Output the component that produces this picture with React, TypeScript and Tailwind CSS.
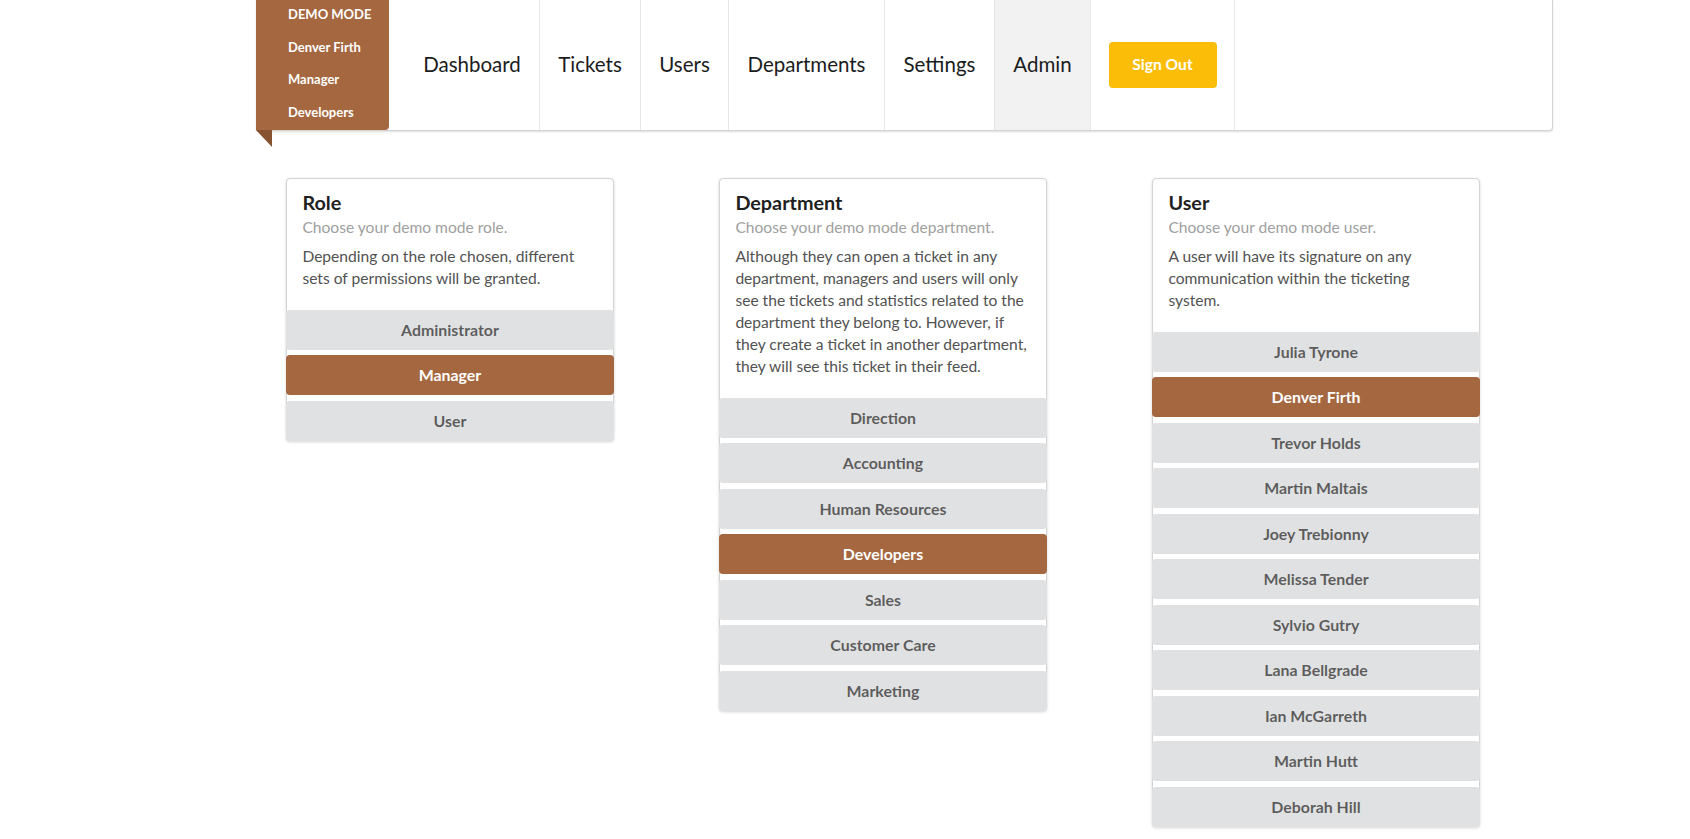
const NAV = [
  { label: "Dashboard", w: "w-[151px] pl-[16px]" },
  { label: "Tickets", w: "w-[101px]" },
  { label: "Users", w: "w-[88px]" },
  { label: "Departments", w: "w-[156px]" },
  { label: "Settings", w: "w-[110px]" },
  { label: "Admin", w: "w-[96px] bg-[#f2f2f2]" },
];

const CARDS = [
  {
    title: "Role",
    meta: "Choose your demo mode role.",
    desc: "Depending on the role chosen, different sets of permissions will be granted.",
    options: ["Administrator", "Manager", "User"],
    active: "Manager",
  },
  {
    title: "Department",
    meta: "Choose your demo mode department.",
    desc: "Although they can open a ticket in any department, managers and users will only see the tickets and statistics related to the department they belong to. However, if they create a ticket in another department, they will see this ticket in their feed.",
    options: ["Direction", "Accounting", "Human Resources", "Developers", "Sales", "Customer Care", "Marketing"],
    active: "Developers",
  },
  {
    title: "User",
    meta: "Choose your demo mode user.",
    desc: "A user will have its signature on any communication within the ticketing system.",
    options: [
      "Julia Tyrone", "Denver Firth", "Trevor Holds", "Martin Maltais", "Joey Trebionny",
      "Melissa Tender", "Sylvio Gutry", "Lana Bellgrade", "Ian McGarreth", "Martin Hutt", "Deborah Hill",
    ],
    active: "Denver Firth",
  },
];

function Card({ title, meta, desc, options, active }: (typeof CARDS)[number]) {
  return (
    <div className="w-[328px] bg-white border border-[#d4d4d5] rounded-[4px] shadow-[0_1px_3px_0_#d4d4d5] flex flex-col">
      <div className="px-[15.4px] pt-[15.4px] pb-[15.4px]">
        <div className="-mt-[4.2px] text-[19.8px] leading-[25.4px] font-bold text-[#1f1f1f]">{title}</div>
        <div className="text-[15.6px] leading-[22px] text-[#a0a0a0]">{meta}</div>
        <p className="mt-[7.7px] text-[15.6px] leading-[22px] text-[#525252]">{desc}</p>
      </div>
      <div className="flex flex-col -mx-px -mb-px">
        {options.map((o) => (
          <button
            key={o}
            className={`mt-[5.5px] first:mt-[5px] h-[40px] rounded-[4px] text-[15.9px] font-bold ${
              o === active ? "bg-[#a5673f] text-white" : "bg-[#e0e1e2] text-black/60"
            }`}
          >
            {o}
          </button>
        ))}
      </div>
    </div>
  );
}

export default function App() {
  return (
    <div className="min-h-screen bg-white font-['Lato',sans-serif] pb-10">
      {/* Top menu */}
      <div className="ml-[256px] w-[1297px] h-[131px] flex bg-white border-r border-b border-[#d4d4d5] rounded-br-[4px] shadow-[0_1px_2px_0_rgba(34,36,38,0.15)]">
        <div className="relative w-[133px] h-[131px] bg-[#a5673f] rounded-br-[4px] pl-[32px] -mt-px flex flex-col text-white text-[13px] font-bold">
          <div className="h-[32.4px] flex items-center">DEMO MODE</div>
          <div className="h-[32.4px] flex items-center">Denver Firth</div>
          <div className="h-[32.4px] flex items-center">Manager</div>
          <div className="h-[32.4px] flex items-center">Developers</div>
          <div className="absolute left-0 top-[131px] w-0 h-0 border-t-[17px] border-l-[16px] border-t-[#87522f] border-l-transparent"></div>
        </div>
        {NAV.map((n) => (
          <div key={n.label} className={`${n.w} h-full flex items-center justify-center border-r border-[#e6e6e6] text-[20.5px] text-[#1b1c1d] pb-[2px]`}>
            {n.label}
          </div>
        ))}
        <div className="w-[144px] h-full flex items-center justify-center border-r border-[#e6e6e6]">
          <button className="w-[108px] h-[45.5px] rounded-[4px] bg-[#fbbd08] text-white font-bold text-[15.6px]">
            Sign Out
          </button>
        </div>
      </div>

      {/* Demo mode cards */}
      <div className="mt-[47px] ml-[286px] flex items-start gap-[105px]">
        {CARDS.map((c) => (
          <Card key={c.title} {...c} />
        ))}
      </div>
    </div>
  );
}
